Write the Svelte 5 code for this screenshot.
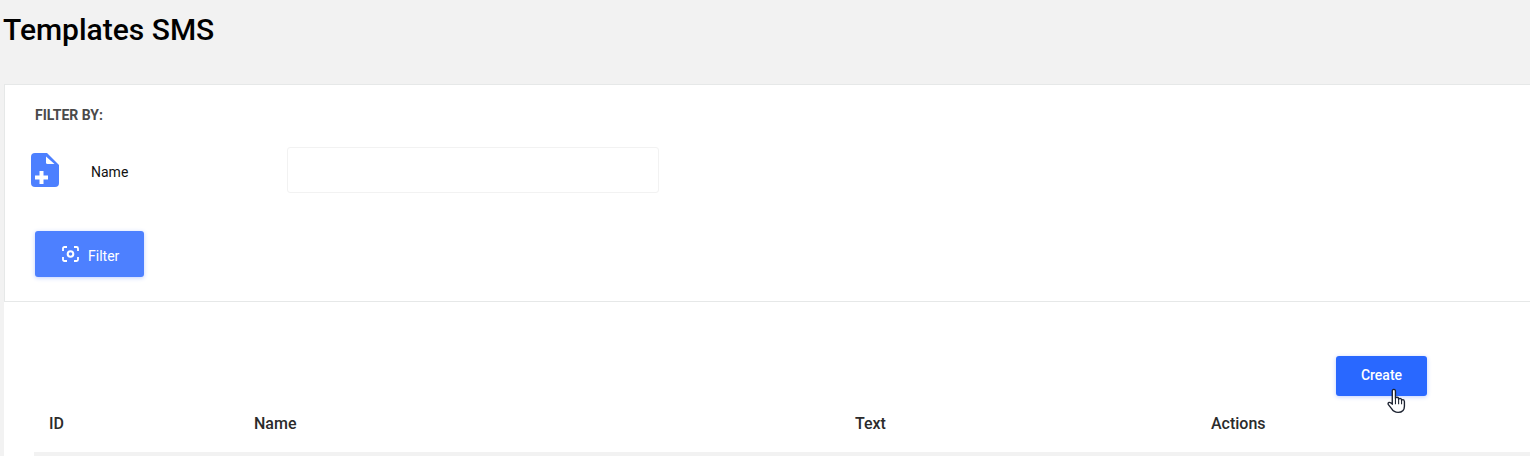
<script>
  const columns = [
    { label: "ID", width: 205 },
    { label: "Name", width: 601 },
    { label: "Text", width: 356 },
    { label: "Actions", width: 282 },
  ];
</script>

<div class="page">
  <h1>Templates SMS</h1>

  <section class="filters">
    <h2>FILTER BY:</h2>
    <div class="field">
      <svg class="file-icon" width="28" height="34" viewBox="0 0 28 34" aria-hidden="true">
        <path d="M4 0H16L28 12V30Q28 34 24 34H4Q0 34 0 30V4Q0 0 4 0Z" fill="#4d80ff" />
        <path d="M15 3.500V9.500Q15 11 16.500 11H23.500Z" fill="#fff" />
        <path d="M8.500 18H12.500V22.500H17V26.500H12.500V31H8.500V26.500H4V22.500H8.500Z" fill="#fff" />
      </svg>
      <label for="name">Name</label>
      <input id="name" type="text" />
    </div>
    <button class="filter-btn">
      <svg width="17" height="16" viewBox="0 0 17 16" fill="none" stroke="#fff" stroke-width="1.800" aria-hidden="true">
        <path d="M1 5V2.500Q1 1 2.500 1H5M12 1H14.500Q16 1 16 2.500V5M16 11V13.500Q16 15 14.500 15H12M5 15H2.500Q1 15 1 13.500V11" />
        <circle cx="8.500" cy="8" r="2.800" stroke-width="2" />
      </svg>
      Filter
    </button>
  </section>

  <section class="list">
    <div class="toolbar">
      <div class="create-wrap">
        <button class="create-btn">Create</button>
        <svg class="cursor" width="19" height="26" viewBox="0 0 18 24" aria-hidden="true">
          <path d="M5 13V3Q5 1 6.500 1T8 3V9.500Q8 8.500 9.500 8.500T11 10V10.500Q11 9.500 12.300 9.500T13.800 11V11.500Q13.800 10.700 15 10.700T16.500 12.500V17Q16.500 22.800 10.500 22.800Q6.500 22.800 4.500 19.500L1.300 15.500Q0.500 14 2 13.300Q3.300 13 5 15Z" fill="#fff" stroke="#1c2230" stroke-width="1.300" stroke-linejoin="round" />
          <path d="M8 9.500V15M11 10.500V15M13.800 11.500V15" stroke="#1c2230" stroke-width="1" fill="none" />
        </svg>
      </div>
    </div>
    <div class="thead">
      {#each columns as col}
        <div class="th" style="width: {col.width}px">{col.label}</div>
      {/each}
    </div>
    <div class="row"></div>
  </section>
</div>

<style>
  :global(body) {
    margin: 0;
    background: #f2f2f2;
    overflow: hidden;
  }

  .page {
    height: 456px;
    overflow: hidden;
    padding-left: 4px;
    font-family: Roboto, "Liberation Sans", sans-serif;
  }

  h1 {
    margin: 0;
    margin-left: -1px;
    height: 84px;
    padding-top: 11px;
    box-sizing: border-box;
    font-size: 30px;
    line-height: 38px;
    font-weight: 500;
    color: #000;
  }

  .filters {
    height: 218px;
    box-sizing: border-box;
    background: #fff;
    border: 1px solid #e6e8e8;
    border-right: none;
    padding: 22px 0 0 30px;
  }

  h2 {
    margin: 0;
    font-size: 14px;
    line-height: 16px;
    font-weight: 700;
    color: #4a4a4a;
  }

  .field {
    display: flex;
    align-items: center;
    margin: 24px 0 0 -4px;
    height: 46px;
  }

  .file-icon {
    flex: none;
  }

  label {
    width: 196px;
    margin-left: 32px;
    padding-top: 4px;
    font-size: 14px;
    color: #111;
  }

  input {
    width: 372px;
    height: 46px;
    box-sizing: border-box;
    border: 1px solid #f2f2f2;
    border-radius: 3px;
    background: #fff;
    outline: none;
  }

  button {
    border: none;
    color: #fff;
    font-family: inherit;
    font-size: 14px;
    font-weight: 400;
    border-radius: 3px;
    box-shadow: 0 1px 4px rgba(50, 100, 255, 0.3);
  }

  .filter-btn {
    display: flex;
    align-items: center;
    gap: 9px;
    width: 109px;
    height: 46px;
    margin-top: 38px;
    padding: 4px 0 0 27px;
    background: #4d80ff;
  }

  .filter-btn svg {
    margin-top: -5px;
  }

  .list {
    height: 154px;
    background: #fff;
    overflow: hidden;
  }

  .toolbar {
    display: flex;
    justify-content: flex-end;
    padding: 54px 103px 0 0;
  }

  .create-wrap {
    position: relative;
  }

  .create-btn {
    display: block;
    width: 91px;
    height: 40px;
    padding: 0 0 2px;
    font-weight: 500;
    background: #2968ff;
  }

  .cursor {
    position: absolute;
    left: 51px;
    top: 32px;
  }

  .thead {
    display: flex;
    margin-left: 30px;
    height: 56px;
  }

  .th {
    flex: none;
    box-sizing: border-box;
    padding: 18px 0 0 15px;
    font-size: 16px;
    line-height: 19px;
    font-weight: 500;
    color: #2b2b2b;
  }

  .row {
    margin-left: 30px;
    height: 10px;
    background: #f2f2f2;
  }
</style>
